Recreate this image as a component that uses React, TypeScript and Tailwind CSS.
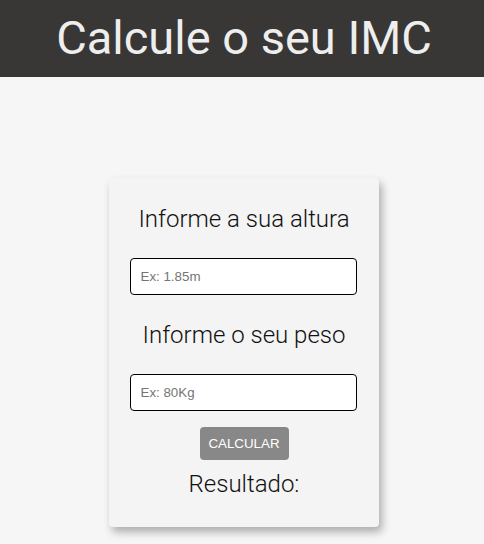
export default function App() {
  return (
    <div className="min-h-[544px] bg-[#f6f6f6]" style={{ fontFamily: "Roboto, sans-serif" }}>
      <header className="h-[77px] bg-[#393735] flex items-center justify-center pl-[4px]">
        <h1 className="text-[47px] leading-none font-normal text-[#eeeeee] pb-[2px]">Calcule o seu IMC</h1>
      </header>
      <div className="flex justify-center pt-[101px] pl-[4px]">
        <div className="w-[270px] h-[349px] bg-[#f4f4f4] rounded-[4px] shadow-[3px_5px_8px_rgba(0,0,0,0.3)] flex flex-col items-center pt-[27px]">
          <p className="text-[24px] leading-[28px] font-light text-[#111]">Informe a sua altura</p>
          <input
            className="mt-[25px] mr-[2px] w-[227px] h-[37px] border-[1.5px] border-black rounded-[4px] bg-white px-[10px] text-[13.333px] placeholder:text-[#757575] outline-none"
            style={{ fontFamily: "'Liberation Sans', Arial, sans-serif" }}
            placeholder="Ex: 1.85m"
          />
          <p className="mt-[26px] text-[24px] leading-[28px] font-light text-[#111]">Informe o seu peso</p>
          <input
            className="mt-[25px] mr-[2px] w-[227px] h-[37px] border-[1.5px] border-black rounded-[4px] bg-white px-[10px] text-[13.333px] placeholder:text-[#757575] outline-none"
            style={{ fontFamily: "'Liberation Sans', Arial, sans-serif" }}
            placeholder="Ex: 80Kg"
          />
          <button
            className="mt-[16px] w-[89px] h-[33px] bg-[#888888] rounded-[4px] text-white text-[13.333px] font-normal"
            style={{ fontFamily: "'Liberation Sans', Arial, sans-serif" }}
          >
            CALCULAR
          </button>
          <p className="mt-[10px] text-[24px] leading-[28px] font-light text-[#111]">Resultado:</p>
        </div>
      </div>
    </div>
  );
}
